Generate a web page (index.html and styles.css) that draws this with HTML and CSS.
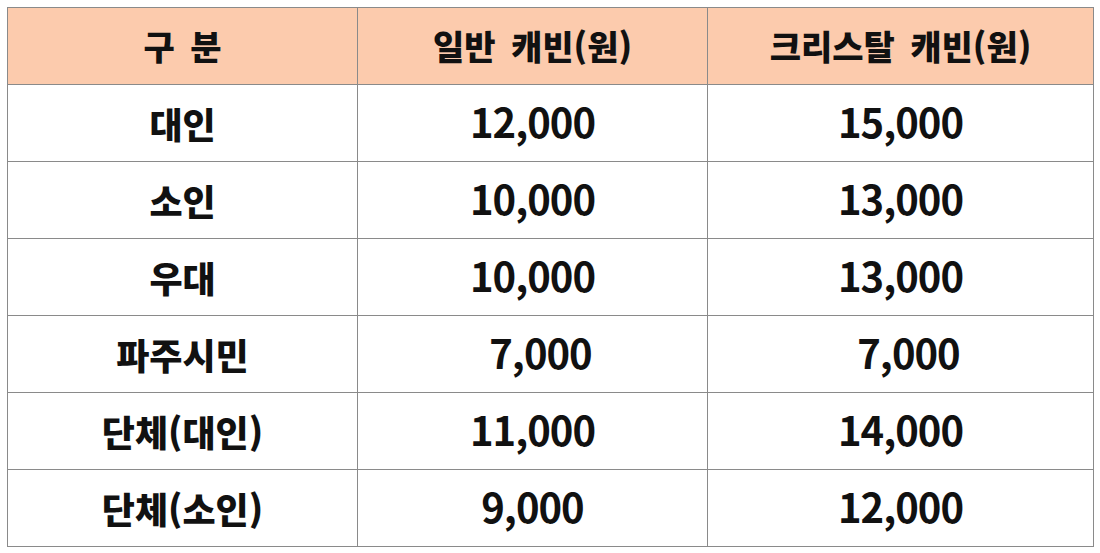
FILE: index.html
```html
<!DOCTYPE html>
<html lang="ko">
<head>
<meta charset="utf-8">
<title>요금표</title>
<link rel="stylesheet" href="styles.css">
</head>
<body>
<table class="fare">
  <colgroup>
    <col class="c1"><col class="c2"><col class="c3">
  </colgroup>
  <thead>
    <tr>
      <th>구 분</th>
      <th>일반 캐빈(원)</th>
      <th>크리스탈 캐빈(원)</th>
    </tr>
  </thead>
  <tbody>
    <tr><td class="label">대인</td><td class="num">12,000</td><td class="num">15,000</td></tr>
    <tr><td class="label">소인</td><td class="num">10,000</td><td class="num">13,000</td></tr>
    <tr><td class="label">우대</td><td class="num">10,000</td><td class="num">13,000</td></tr>
    <tr><td class="label">파주시민</td><td class="num shift">7,000</td><td class="num shift">7,000</td></tr>
    <tr><td class="label">단체(대인)</td><td class="num">11,000</td><td class="num">14,000</td></tr>
    <tr><td class="label">단체(소인)</td><td class="num">9,000</td><td class="num">12,000</td></tr>
  </tbody>
</table>
</body>
</html>
```

FILE: styles.css
```css
html, body {
  margin: 0;
  padding: 0;
  background: #ffffff;
}
body {
  padding: 7px 0 0 7px;
  font-family: "Noto Sans CJK KR", "Noto Sans", sans-serif;
  color: #111111;
}
.fare {
  border-collapse: collapse;
  width: 1086px;
  table-layout: fixed;
}
.c1 { width: 350px; }
.c2 { width: 350px; }
.c3 { width: 386px; }
.fare th, .fare td {
  border: 1.5px solid #8a8a8a;
  height: 76px;
  padding: 0;
  text-align: center;
  vertical-align: middle;
  line-height: 1;
}
.fare th {
  background: #fccbad;
  font-size: 34px;
  font-weight: 900;
  word-spacing: 6px;
}
.label {
  font-size: 36px;
  font-weight: 900;
}
.fare td.num {
  font-size: 40px;
  font-weight: 700;
  letter-spacing: -1px;
  height: 72px;
  padding-bottom: 4px;
}
.fare td.shift {
  padding-left: 16px;
}
```
